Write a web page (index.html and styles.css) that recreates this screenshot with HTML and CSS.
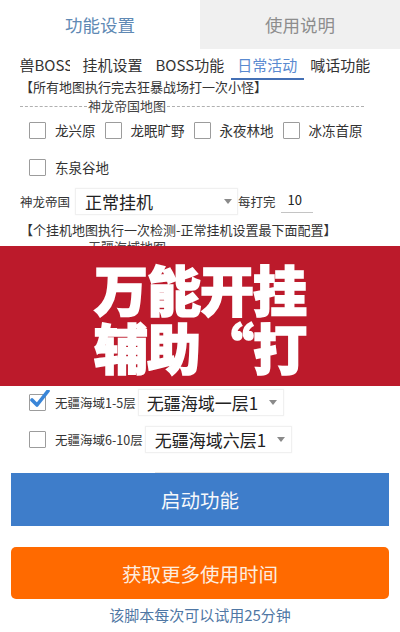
FILE: index.html
```html
<!DOCTYPE html>
<html lang="zh">
<head>
<meta charset="utf-8">
<link rel="stylesheet" href="styles.css">
</head>
<body>
<div class="page">
  <div class="tabs">
    <div class="tab active">功能设置</div>
    <div class="tab inactive">使用说明</div>
  </div>
  <div class="subtabs">
    <div class="stab"><span class="clip">兽BOSS</span></div>
    <div class="stab">挂机设置</div>
    <div class="stab">BOSS功能</div>
    <div class="stab current">日常活动</div>
    <div class="stab">喊话功能</div>
  </div>
  <div class="note note1">【所有地图执行完去狂暴战场打一次小怪】</div>
  <div class="divider div1"><span class="dash short"></span><span class="dtext">神龙帝国地图</span><span class="dash long"></span></div>
  <div class="cbrow row1">
    <span class="cb"></span><span class="cbl">龙兴原</span>
    <span class="cb"></span><span class="cbl">龙眠旷野</span>
    <span class="cb"></span><span class="cbl">永夜林地</span>
    <span class="cb"></span><span class="cbl">冰冻首原</span>
  </div>
  <div class="cbrow row2">
    <span class="cb"></span><span class="cbl">东泉谷地</span>
  </div>
  <div class="selrow">
    <span class="slabel">神龙帝国</span>
    <div class="spinner sp1"><span class="sptext">正常挂机</span><span class="arrow"></span></div>
    <span class="slabel">每打完</span>
    <span class="input">10</span>
  </div>
  <div class="note note2">【个挂机地图执行一次检测-正常挂机设置最下面配置】</div>
  <div class="divider div2"><span class="dash short2"></span><span class="dtext">无疆海域地图</span><span class="dash long"></span></div>
  <div class="cbrow row3">
    <span class="cb checked"><svg width="22" height="22" viewBox="0 0 22 22"><path d="M3 10 L8 15 L19 1" fill="none" stroke="#3a86d8" stroke-width="3.6" stroke-linecap="round" stroke-linejoin="round"/></svg></span>
    <span class="cbl small">无疆海域1-5层</span>
    <div class="spinner sp3"><span class="sptext">无疆海域一层1</span><span class="arrow"></span></div>
  </div>
  <div class="cbrow row4">
    <span class="cb"></span>
    <span class="cbl small">无疆海域6-10层</span>
    <div class="spinner sp4"><span class="sptext">无疆海域六层1</span><span class="arrow"></span></div>
  </div>
  <div class="faint"></div>
  <div class="btn blue">启动功能</div>
  <div class="btn orange">获取更多使用时间</div>
  <div class="foot">该脚本每次可以试用25分钟</div>

  <div class="banner">
    <div class="btext">万能开挂<br>辅助“打</div>
  </div>
</div>
</body>
</html>
```
FILE: styles.css
```css
* { box-sizing: border-box; }
html, body { margin: 0; padding: 0; background: #fff; }
body {
  font-family: "Noto Sans CJK SC", "Noto Sans", sans-serif;
  color: #333;
  width: 400px;
  height: 632px;
  overflow: hidden;
}
.page { position: relative; width: 400px; height: 632px; display: flex; flex-direction: column; }

.tabs { display: flex; height: 49px; }
.tab { flex: 1; display: flex; align-items: center; justify-content: center; font-size: 17.5px; }
.tab.active { color: #6089b4; background: #fff; }
.tab.inactive { color: #8d8d8d; background: #f0f0f0; }

.subtabs { display: flex; padding: 4px 0 0 13px; height: 31px; }
.stab { padding: 0 6.5px; font-size: 15px; line-height: 24px; color: #333; white-space: nowrap; border-bottom: 2px solid transparent; }
.stab .clip { display: inline-block; max-width: 50px; overflow: hidden; vertical-align: top; }
.stab.current { color: #5a8ad0; border-bottom-color: #4470b5; }

.note { font-size: 13px; line-height: 14px; padding-left: 20px; color: #333; white-space: nowrap; }
.note1 { line-height: 14px; }
.note2 { margin-top: 8px; line-height: 16px; font-size: 13px; }

.divider { display: flex; align-items: center; padding-left: 20px; margin-top: 4px; height: 16px; }
.div2 { margin-top: 1px; }
.dash { border-top: 1px dashed #b0b0b0; height: 0; }
.dash.short { width: 67px; }
.dash.short2 { width: 67px; }
.dash.long { width: 197px; }
.dtext { font-size: 13px; color: #444; padding: 0 1px; line-height: 16px; }

.cbrow { display: flex; align-items: center; padding-left: 29px; height: 30px; }
.row1 { margin-top: 1px; }
.row2 { margin-top: 7px; }
.row3 { margin-top: 132px; }
.row4 { margin-top: 7px; }
.cb { width: 17px; height: 17px; border: 1.5px solid #9c9c9c; border-radius: 1px; flex: none; position: relative; background: #fff; }
.cb svg { position: absolute; left: -1px; top: -5px; }
.cbl { font-size: 13.5px; color: #333; margin: 0 9px 0 9px; white-space: nowrap; }
.cbl.small { font-size: 12.5px; margin: 0 2px 0 9px; }

.selrow { display: flex; align-items: center; padding-left: 20px; height: 26px; margin-top: 6px; }
.slabel { font-size: 12.5px; color: #333; white-space: nowrap; }
.spinner { display: flex; align-items: center; justify-content: space-between; height: 27px; border: 1px solid #f0f0f0; box-shadow: 0 0 2px rgba(0,0,0,0.04); background: #fff; }
.sp1 { width: 163px; margin-left: 5px; padding: 0 5px 0 9px; }
.sp3 { width: 146px; padding: 0 6px 0 8px; }
.sp4 { width: 147px; padding: 0 6px 0 9px; }
.sptext { font-size: 17px; color: #222; white-space: nowrap; }
.arrow { width: 0; height: 0; border-left: 4.5px solid transparent; border-right: 4.5px solid transparent; border-top: 5.5px solid #8a8a8a; }
.input { margin-left: 5px; width: 32px; height: 24px; font-size: 13px; line-height: 22px; padding-left: 7px; border-bottom: 1.5px solid #c4c4c4; color: #222; }

.faint { margin: 18px 0 0 155px; width: 165px; height: 1px; background: #e6e6e6; }
.btn { margin: 0 11px; display: flex; align-items: center; justify-content: center; font-size: 19.5px; color: #f6f8fb; }
.btn.blue { height: 53px; background: #3e7dca; }
.btn.orange { height: 52px; margin-top: 21px; background: #ff6a00; border-radius: 5px; color: #fdeee0; }
.foot { margin-top: 6px; text-align: center; font-size: 15px; line-height: 20px; color: #4f77a4; }

.banner {
  position: absolute; left: 0; top: 246px; width: 400px; height: 140px;
  background: #bc1a2b;
  display: flex; align-items: center; justify-content: center;
}
.btext { color: #fff; font-weight: 900; font-size: 54px; line-height: 58px; text-align: center; padding-top: 4px; letter-spacing: -1px; -webkit-text-stroke: 1.6px #fff; }
```
